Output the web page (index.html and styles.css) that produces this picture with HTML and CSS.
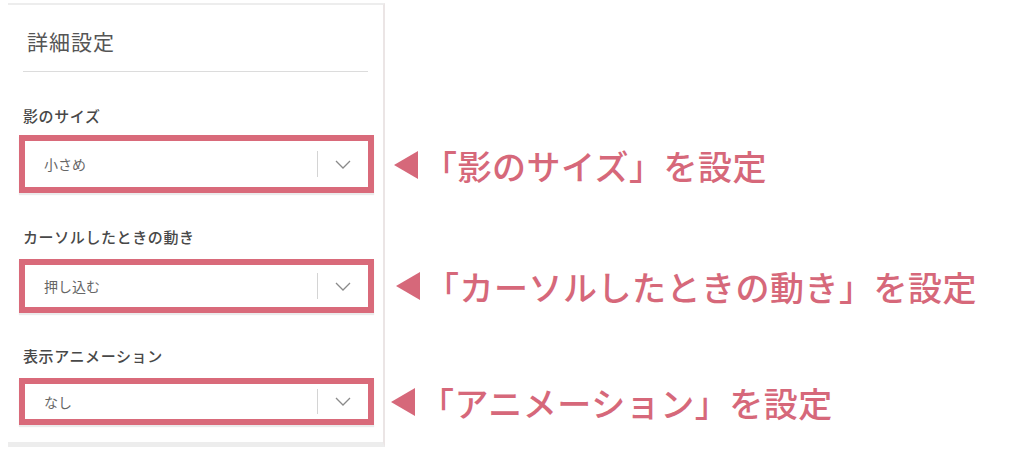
FILE: index.html
```html
<!DOCTYPE html>
<html lang="ja">
<head>
  <meta charset="UTF-8">
  <meta name="viewport" content="width=device-width, initial-scale=1.0">
  <title>詳細設定</title>
  <link rel="stylesheet" href="styles.css">
</head>
<body>
  <div class="page">
    <section class="panel">
      <h2 class="panel-title">詳細設定</h2>
      <hr class="panel-rule">

      <div class="field field-shadow">
        <label class="field-label">影のサイズ</label>
        <div class="select select-lg">
          <span class="select-value">小さめ</span>
          <span class="select-arrow">
            <svg width="16" height="9" viewBox="0 0 16 9"><path d="M1 1 L8 8 L15 1" fill="none" stroke="#8a8a8a" stroke-width="1.3"/></svg>
          </span>
        </div>
      </div>

      <div class="field field-hover">
        <label class="field-label">カーソルしたときの動き</label>
        <div class="select select-md">
          <span class="select-value">押し込む</span>
          <span class="select-arrow">
            <svg width="16" height="9" viewBox="0 0 16 9"><path d="M1 1 L8 8 L15 1" fill="none" stroke="#8a8a8a" stroke-width="1.3"/></svg>
          </span>
        </div>
      </div>

      <div class="field field-anim">
        <label class="field-label">表示アニメーション</label>
        <div class="select select-sm">
          <span class="select-value">なし</span>
          <span class="select-arrow">
            <svg width="16" height="9" viewBox="0 0 16 9"><path d="M1 1 L8 8 L15 1" fill="none" stroke="#8a8a8a" stroke-width="1.3"/></svg>
          </span>
        </div>
      </div>
    </section>

    <div class="notes">
      <p class="note note-1"><span class="note-mark"></span>「影のサイズ」を設定</p>
      <p class="note note-2"><span class="note-mark"></span>「カーソルしたときの動き」を設定</p>
      <p class="note note-3"><span class="note-mark"></span>「アニメーション」を設定</p>
    </div>
  </div>
</body>
</html>
```

FILE: styles.css
```css
html {
  font-family: "Noto Sans CJK JP", "Noto Sans", sans-serif;
}

body {
  margin: 0;
  background: #fff;
}

.page {
  display: flex;
  align-items: flex-start;
}

.panel {
  box-sizing: border-box;
  width: 377px;
  margin: 3px 0 0 8px;
  padding: 0 15px 17px;
  border-top: 2px solid #ededed;
  border-right: 2px solid #ebe5e5;
  border-bottom: 5px solid #ededed;
}

.panel-title {
  margin: 21px 0 0;
  padding-left: 4px;
  font-size: 21px;
  font-weight: 400;
  line-height: 30px;
  letter-spacing: 1px;
  color: #555;
}

.panel-rule {
  margin: 15px 0 0;
  border: 0;
  border-top: 1px solid #dcdcdc;
}

.field-label {
  display: block;
  font-size: 15px;
  font-weight: 500;
  line-height: 20px;
  letter-spacing: 0.6px;
  color: #484848;
}

.field-shadow { margin-top: 34px; }
.field-hover { margin-top: 34px; }
.field-anim { margin-top: 33px; }

.select {
  display: flex;
  align-items: center;
  margin: 9px -6px 0 -4px;
  border: 6px solid #d96a7a;
  background: #fff;
  box-shadow: 0 2px 1px rgba(0, 0, 0, 0.08);
}

.select-lg { height: 46px; }
.select-md { height: 42px; margin-top: 12px; }
.select-sm { height: 35px; margin-top: 12px; }

.select-value {
  flex: 1;
  padding-left: 19px;
  font-size: 14px;
  color: #666;
}

.select-arrow {
  display: flex;
  align-items: center;
  justify-content: center;
  width: 50px;
  height: 26px;
  border-left: 1px solid #d4d4d4;
}

.select-sm .select-arrow { height: 25px; }

.notes {
  display: flex;
  flex-direction: column;
  margin-left: 9px;
}

.note {
  display: flex;
  align-items: center;
  margin: 0;
  height: 40px;
  font-size: 34px;
  font-weight: 500;
  letter-spacing: 0.5px;
  color: #d6687a;
  white-space: nowrap;
}

.note-mark {
  width: 0;
  height: 0;
  margin-right: 5px;
  border-top: 14px solid transparent;
  border-bottom: 14px solid transparent;
  border-right: 24px solid #d6687a;
}

.note-1 { margin-top: 145px; }
.note-2 { margin-top: 81px; margin-left: 2px; }
.note-3 { margin-top: 76px; margin-left: -3px; }
```
